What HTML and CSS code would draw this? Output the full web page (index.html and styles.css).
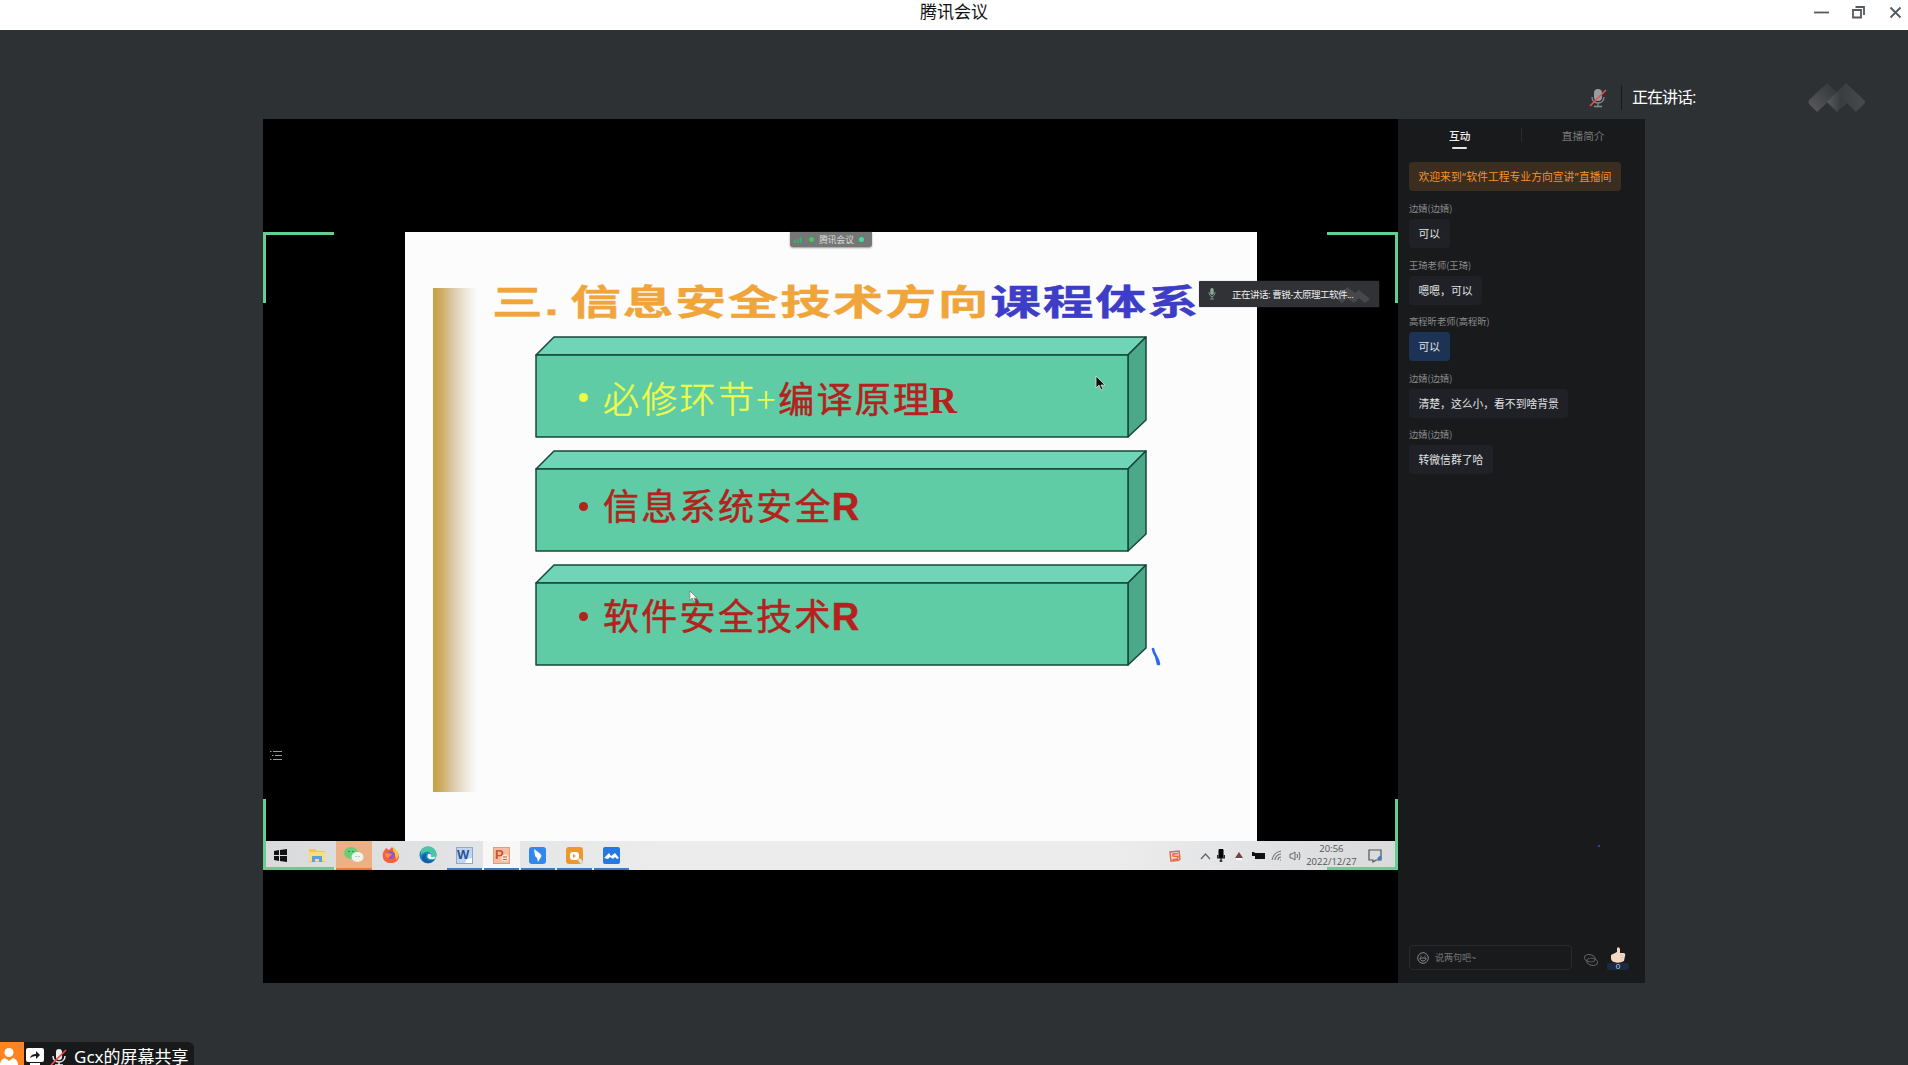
FILE: index.html
```html
<!DOCTYPE html>
<html lang="zh-CN">
<head>
<meta charset="utf-8">
<title>腾讯会议</title>
<link rel="stylesheet" href="styles.css">
</head>
<body>
<header class="titlebar">
  <span></span>
  <h1 class="app-title">腾讯会议</h1>
  <div class="window-controls">
    <svg width="16" height="16" viewBox="0 0 16 16"><path d="M0 8.500h15"/></svg>
    <svg width="16" height="16" viewBox="0 0 16 16"><path d="M2 6h8v7.500H2zM4.500 3h8.500v8"/></svg>
    <svg width="16" height="16" viewBox="0 0 16 16"><path d="M2.500 3.500l10 10M12.500 3.500L2.500 13.500"/></svg>
  </div>
</header>
<main class="meeting">
  <section class="speaker">
    <svg class="speaker-mic" width="18" height="20" viewBox="0 0 18 20"><rect x="5" y="1" width="8" height="12" rx="4" fill="#999c9e"/><path d="M3 9c0 8 12 8 12 0M9 15v3M5 18.500h8" fill="none" stroke="#8a8d8f" stroke-width="1.300"/><path d="M1 18L17 2" stroke="#e4524b" stroke-width="1.600"/></svg>
    <span class="speaker-name">正在讲话:</span>
    <svg class="watermark" width="58" height="30" viewBox="0 0 58 30">
      <defs><linearGradient id="wm" x1="0" y1="1" x2="1" y2="0"><stop offset="0" stop-color="#5a5b5e"/><stop offset="1" stop-color="#303437"/></linearGradient><linearGradient id="wm2" x1="0" y1="0" x2="1" y2="0"><stop offset="0" stop-color="#5a5b5e"/><stop offset=".35" stop-color="#3a3d40"/><stop offset="1" stop-color="#48494c"/></linearGradient></defs>
      <path d="M19 0L29 9L20 19L9 29L2 22Q-1 19 2 16Z" fill="url(#wm)"/>
      <path d="M38 0L55 16Q59 19 55 22L48 29L39 20L29 29L19 19Z" fill="url(#wm2)"/>
    </svg>
  </section>
  <div class="live">
    <section class="share">
      <div class="desktop">
        <div class="side"></div>
        <article class="slide">
          <div class="gold"></div>
          <div class="content">
            <h2 class="slide-title"><span class="num">三.</span><span>信息安全技术方向</span><span class="blue">课程体系</span></h2>
            <div class="block first">
              <svg class="solid" viewBox="0 0 612 102"><path d="M1 19L19 1H611L593 19z" fill="#70d5b7"/><path d="M593 19L611 1V84L593 101z" fill="#4ba98a"/><path d="M1 19H593V101H1z" fill="#5fcca5"/></svg>
              <p class="line yellow"><i></i><span class="thin">必修环节</span><span class="plus">+</span><span class="red">编译原理</span><b class="serif">R</b></p>
              <svg class="pointer dark" width="10" height="16" viewBox="0 0 10 16"><path d="M1 1v12l3-3 2 5 2-1-2-4h4z"/></svg>
            </div>
            <div class="block">
              <svg class="solid" viewBox="0 0 612 102"><path d="M1 19L19 1H611L593 19z" fill="#70d5b7"/><path d="M593 19L611 1V84L593 101z" fill="#4ba98a"/><path d="M1 19H593V101H1z" fill="#5fcca5"/></svg>
              <p class="line red"><i></i><span>信息系统安全</span><b>R</b></p>
            </div>
            <div class="block third">
              <svg class="solid" viewBox="0 0 612 102"><path d="M1 19L19 1H611L593 19z" fill="#70d5b7"/><path d="M593 19L611 1V84L593 101z" fill="#4ba98a"/><path d="M1 19H593V101H1z" fill="#5fcca5"/></svg>
              <p class="line red"><i></i><span>软件安全技术</span><b>R</b></p>
              <svg class="pointer light" width="8" height="13" viewBox="0 0 10 16"><path d="M1 1v12l3-3 2 5 2-1-2-4h4z"/></svg>
              <svg class="ink" width="11" height="20" viewBox="0 0 11 20"><path d="M2 2C3 8 7 10 8 17M5 9L7 17" fill="none" stroke="#2868ef" stroke-width="2.600" stroke-linecap="round"/></svg>
            </div>
          </div>
          <div class="meeting-pill"><svg width="10" height="7" viewBox="0 0 10 7"><path d="M1 7V4M4 7V3M7 7V1" stroke="#36b06e" stroke-width="1.800"/></svg><i></i><span>腾讯会议</span><i class="teal"></i></div>
        </article>
        <div class="side"></div>
        <footer class="taskbar">
          <nav class="apps">
            <div class="app"><svg width="13" height="13" viewBox="0 0 13 13"><path d="M0 2l5-1v5H0zM6 1l7-1v6H6zM0 7h5v5l-5-1zM6 7h7v6l-7-1z" fill="#111"/></svg></div>
            <div class="app"><svg width="18" height="16" viewBox="0 0 18 16"><path d="M1 2h6l2 2h8v11H1z" fill="#f2c850"/><path d="M1 5h16v9H1z" fill="#fbdc7b"/><path d="M4 15V9h10v6h-3v-3H7v3z" fill="#56a5d6"/></svg></div>
            <div class="app wechat"><svg width="20" height="16" viewBox="0 0 20 16"><ellipse cx="7" cy="6" rx="7" ry="6" fill="#65cf7a"/><ellipse cx="13.500" cy="10" rx="6" ry="5" fill="#edf5ef"/><path d="M5 4v1M9 4v1" stroke="#317a43" stroke-width="1.500"/><path d="M12 9v1M15 9v1" stroke="#8ba08f"/></svg></div>
            <div class="app"><svg width="18" height="18" viewBox="0 0 18 18"><path d="M4 2l3 2 3-3 2 3c7 2 7 13-3 13C-1 17 0 7 2 5z" fill="#f6603c"/><path d="M11 1c6 4 7 9 3 13 0-6-4-5-3-13z" fill="#ffc33f"/><circle cx="9" cy="9" r="4" fill="#9355cb"/><path d="M3 8c3-2 5 0 7 0-1 2-3 2-3 4-3 0-4-2-4-4z" fill="#fb8b39"/></svg></div>
            <div class="app"><svg width="18" height="18" viewBox="0 0 18 18"><circle cx="9" cy="9" r="8.500" fill="#1781c8"/><path d="M2 4c5-6 15-4 15.500 5 0 4-6 4-6 2 2-6-5-7-9.500-2z" fill="#4bc6a4"/><path d="M7 8c-2 5 3 8 8 6-4 5-12 3-12-2 0-3 2-4 4-4z" fill="#155d9f"/><path d="M9 8c-2 4 1 6 6 5l2-1c-1-2-3-1-5-1 1-2-1-4-3-3z" fill="#e5f3f5"/></svg></div>
            <div class="app run"><svg width="17" height="17" viewBox="0 0 17 17"><rect x=".5" y=".5" width="16" height="16" fill="#c3d5ec" stroke="#8ba8cf"/><text x="1" y="12" class="office word">W</text><path d="M9 16l2-4 5-1v5z" fill="#fff"/></svg></div>
            <div class="app run active"><svg width="17" height="17" viewBox="0 0 17 17"><rect x=".5" y=".5" width="16" height="16" fill="#f2bfa4" stroke="#d8a083"/><text x="2" y="12" class="office power">P</text><circle cx="12" cy="11" r="3.500" fill="#fae8de"/><path d="M10 10h4M10 12.500h4" stroke="#d4532d"/></svg></div>
            <div class="app run"><svg width="17" height="17" viewBox="0 0 17 17"><rect width="17" height="17" rx="3" fill="#3187ee"/><path d="M5 2c3 3 9 5 7 8l-3 5-1-4-2-2z" fill="#fff"/></svg></div>
            <div class="app run"><svg width="17" height="17" viewBox="0 0 17 17"><rect width="17" height="17" rx="3" fill="#ed982c"/><rect x="4" y="5" width="9" height="8" rx="3" fill="#fff"/><path d="M7 7l3 2-3 2z" fill="#ed982c"/><path d="M13 12l3 4" stroke="#d5e4f0" stroke-width="3"/></svg></div>
            <div class="app run"><svg width="17" height="17" viewBox="0 0 17 17"><rect width="17" height="17" rx="2" fill="#2577e4"/><path d="M1 11l5-5 2 3 4-3 4 5-2 1-2-2-2 2-3-2-2 2z" fill="#fff"/></svg></div>
          </nav>
          <div class="tray">
            <svg width="12" height="12" viewBox="0 0 12 12"><path d="M9 3.500L4 4v2l5 .5-.5 2.500-5 .5M1 2l9-1 1 8q0 2-9 2z" fill="none" stroke="#e7673e" stroke-width="1.500"/></svg>
            <svg class="caret" width="11" height="8" viewBox="0 0 11 8"><path d="M1 7l4.500-5L10 7" fill="none" stroke="#666" stroke-width="1.300"/></svg>
            <svg width="8" height="13" viewBox="0 0 8 13"><rect x="1.500" width="5" height="9" rx="1"/><path d="M.7 6v3h6.600V6M4 9v4M2.500 12h3" fill="none" stroke="#111" stroke-width="1.200"/></svg>
            <svg class="drop" width="10" height="10" viewBox="0 0 10 10"><path d="M5 1l4 6H1z" fill="#70434a"/><path d="M2 8h6" stroke="#fff" stroke-width="2"/></svg>
            <svg width="13" height="9" viewBox="0 0 13 9"><path d="M2 2h11v6H3V5H0V1h3z" fill="#111"/></svg>
            <svg width="11" height="11" viewBox="0 0 11 11"><path d="M1 10C2 5 5 2 10 1M4 10c0-3 3-6 6-6M7 10c0-2 1-3 3-3M10 10H9" fill="none" stroke="#777" stroke-width="1.200"/></svg>
            <svg width="12" height="10" viewBox="0 0 12 10"><path d="M1 3h2l3-2v8L3 7H1zM8 3q1 2 0 4M10 1q2 4 0 8" fill="none" stroke="#666"/></svg>
            <time class="clock"><span>20:56</span><span>2022/12/27</span></time>
            <svg width="15" height="14" viewBox="0 0 15 14"><path d="M1 1h12v10H8l-3 2v-2H1z" fill="none" stroke="#555" stroke-width="1.200"/><path d="M10 10.500l3-3" stroke="#3978d1" stroke-width="2.500"/></svg>
          </div>
        </footer>
        <i class="corner tl"></i><i class="corner tr"></i><i class="corner bl"></i><i class="corner br"></i>
        <svg class="list-icon" width="12" height="11" viewBox="0 0 12 11"><path d="M3 1.500h9M5 5.500h7M3 9.500h9M0 1.500h1.500M2 5.500h1.500M0 9.500h1.500" stroke="#999"/></svg>
        <div class="talking"><svg width="8" height="12" viewBox="0 0 8 12"><rect x="2.300" width="3.400" height="7" rx="1.700" fill="#8aa99c"/><path d="M1 4c0 6 6 6 6 0M4 8v3M2 11h4" fill="none" stroke="#769184"/></svg><span>正在讲话: 曹锐-太原理工软件...</span><svg class="talk-mark" width="34" height="16" viewBox="0 0 34 16"><path d="M0 11L11 0l8 6 4-3 11 9-5 4-6-5-5 5-7-5-5 5z" fill="#55575b"/></svg></div>
      </div>
    </section>
    <aside class="chat">
      <nav class="tabs"><span class="tab selected">互动</span><span class="tab">直播简介</span></nav>
      <p class="welcome">欢迎来到<q>“</q>软件工程专业方向宣讲<q>”</q>直播间</p>
      <div class="message"><span class="name">边婧(边婧)</span><p class="bubble">可以</p></div>
      <div class="message"><span class="name">王琦老师(王琦)</span><p class="bubble">嗯嗯，可以</p></div>
      <div class="message"><span class="name">高程昕老师(高程昕)</span><p class="bubble own">可以</p></div>
      <div class="message"><span class="name">边婧(边婧)</span><p class="bubble">清楚，这么小，看不到啥背景</p></div>
      <div class="message"><span class="name">边婧(边婧)</span><p class="bubble">转微信群了哈</p></div>
      <div class="composer">
        <div class="input"><svg width="12" height="12" viewBox="0 0 12 12"><circle cx="6" cy="6" r="5.300"/><path d="M4 3.500v1M8 3.500v1M3 6h6c0 4-6 4-6 0z"/></svg><span>说两句吧~</span></div>
        <svg class="link" width="16" height="14" viewBox="0 0 16 14"><g transform="rotate(12 8 7)"><ellipse cx="6.500" cy="5.500" rx="5.500" ry="3.500"/><ellipse cx="9.500" cy="8.500" rx="5.500" ry="3.500"/></g></svg>
        <div class="like"><svg width="16" height="16" viewBox="0 0 16 16"><path d="M1 8l6-3V1q2-2 3 1v4h4q2 1 1 3l-1 5q-5 3-10 1-3-1-3-4z" fill="#f3d9c5"/><path d="M10 8h4M10 10.500h4M10 13h3" stroke="#d9b9a4" stroke-width=".6"/></svg><span>0</span></div>
      </div>
      <i class="blue-dot"></i>
    </aside>
  </div>
  <footer class="sharer">
    <span class="avatar"><svg width="24" height="23" viewBox="0 0 24 23"><circle cx="9" cy="10.500" r="4.500" fill="#fff"/><path d="M0 23v-1q1-5 5-6l4 3 4-3q4 1 5 6v1z" fill="#fff"/></svg></span>
    <svg class="shift" width="18" height="17" viewBox="0 0 18 17"><rect width="18" height="14" rx="2" fill="#fff"/><path d="M4 10q1-4 6-4V3l4 4-4 4V8q-3 0-6 2z" fill="#181a1c"/><path d="M4 16h10" stroke="#fff" stroke-width="2"/></svg>
    <svg class="shift" width="18" height="18" viewBox="0 0 18 18"><rect x="6" y="1" width="6" height="11" rx="3" fill="#eee"/><path d="M3 8c0 8 12 8 12 0M9 14v4M5 17h8" fill="none" stroke="#eee" stroke-width="1.500"/><path d="M1 17L16 2" stroke="#e84b48" stroke-width="1.700"/></svg>
    <span class="sharer-name">Gcx的屏幕共享</span>
  </footer>
</main>
</body>
</html>
```
FILE: styles.css
```css
* { box-sizing: border-box; }
body { margin: 0; width: 1908px; height: 1065px; overflow: hidden; display: flex; flex-direction: column; background: #2d3134; font-family: "Liberation Sans", "Noto Sans CJK SC", sans-serif; }
h1, h2, p { margin: 0; }
svg { display: block; flex: none; }
.titlebar { height: 30px; flex: none; display: grid; grid-template-columns: 1fr auto 1fr; align-items: center; background: #fff; }
.app-title { font-size: 17px; font-weight: 400; line-height: 24px; color: #111; padding-bottom: 4px; }
.window-controls { display: flex; justify-content: flex-end; gap: 21px; padding: 0 4px 6px 0; }
.window-controls path { fill: none; stroke: #555960; stroke-width: 1.8; }
.meeting { flex: 1; min-height: 0; display: flex; flex-direction: column; }
.speaker { height: 89px; flex: none; display: flex; align-items: center; padding: 46px 42px 0 1589px; }
.speaker-name { margin-left: 14px; padding-left: 10px; border-left: 1px solid #17191b; font-size: 16px; letter-spacing: -1px; line-height: 25px; color: #fff; white-space: nowrap; }
.watermark { margin-left: auto; }
.live { height: 864px; flex: none; display: flex; margin-left: 263px; width: 1382px; }
.share { width: 1135px; flex: none; background: #000; padding-top: 113px; }
.desktop { position: relative; height: 638px; display: grid; grid-template: 609px 29px / 142px 852px 141px; }
.slide { position: relative; background: #fcfcfd; display: flex; padding: 56px 0 0 28px; }
.gold { width: 44px; height: 504px; flex: none; background: linear-gradient(90deg, #c6a044 0%, #cead62 20%, #dcc9aa 45%, #eee8dc 75%, #fcfcfd 100%); }
.content { flex: 1; padding-left: 15px; }
.slide-title { display: flex; height: 48px; margin-top: -5px; width: 486px; transform: scaleX(1.45); transform-origin: left; font: 700 35px/40px "Liberation Sans", "Noto Sans CJK SC", sans-serif; letter-spacing: 1.2px; color: #f0a53a; white-space: nowrap; -webkit-text-stroke: .4px currentColor; }
.num { width: 54px; flex: none; }
.blue { color: #3d3dc8; }
.block { position: relative; width: 612px; height: 102px; margin: 0 0 12px 42.5px; padding: 34px 0 0 44.5px; }
.block.first { padding-top: 37px; margin-top: 5px; }
.block.third { padding-top: 30px; }
.solid { position: absolute; inset: 0; width: 612px; height: 102px; }
.solid path { stroke: #16473a; stroke-width: 1.5; stroke-linejoin: round; }
.line { position: relative; display: flex; align-items: baseline; height: 48px; font-size: 36px; line-height: 48px; letter-spacing: 2.3px; white-space: nowrap; }
.line i { width: 9px; height: 9px; margin: 0 15px 3px 0; border-radius: 50%; background: currentColor; align-self: center; }
.first .line i { margin-bottom: 0; }
.line b { letter-spacing: 0; font-size: 38px; line-height: 40px; margin-left: -1px; }
.line .serif { font-family: "Liberation Serif", serif; font-size: 38px; color: #b3221c; margin-left: -2px; }
.yellow { color: #effb45; }
.red { color: #b3221c; font-weight: 400; -webkit-text-stroke: .5px currentColor; }
.thin { font-weight: 300; -webkit-text-stroke: .5px currentColor; }
.plus { width: 22px; font-family: "Noto Sans CJK SC", sans-serif; font-weight: 300; }
.pointer { position: absolute; }
.dark { left: 560px; top: 39px; fill: #111; stroke: #ddd; stroke-width: .8; }
.light { left: 154px; top: 26px; fill: #fff; stroke: #777; }
.ink { position: absolute; left: 616px; top: 83px; }
.meeting-pill { position: absolute; top: 0; left: 385px; width: 82px; height: 15px; display: flex; align-items: center; justify-content: center; gap: 5px; padding-right: 4px; border-radius: 0 0 3px 3px; background: #747775; box-shadow: 0 1px 2px #999; font-size: 8.7px; line-height: 14px; color: #ddd; }
.meeting-pill i { width: 5px; height: 5px; border-radius: 50%; background: #42c765; }
.meeting-pill .teal { background: #3ce0a0; }
.taskbar { grid-column: 1 / 4; background: linear-gradient(90deg, #d9dadb, #ececed 35%, #ececed 75%, #d8dadb); display: flex; justify-content: space-between; padding: 0 15px 0 0; }
.apps { display: flex; margin-left: -1px; }
.app { width: 36.8px; display: flex; align-items: center; justify-content: center; padding-top: 1px; border-bottom: 2px solid transparent; }
.wechat { background: #ebb184; border-color: #ed7a34; }
.run { border-image: linear-gradient(90deg, transparent 8%, #3778c7 8%, #3778c7 92%, transparent 92%) 2; }
.active { background: #f8f7f6; }
.office { font: bold 13px "Liberation Sans", sans-serif; }
.word { fill: #245399; }
.power { fill: #d35428; }
.tray { display: flex; align-items: center; gap: 6.6px; }
.caret { margin-left: 12px; }
.drop { margin: 0 1px 0 2px; }
.clock { width: 50px; display: flex; flex-direction: column; align-items: center; font: 9.5px/13px "Open Sans", sans-serif; color: #555; margin: 0 5px 1px -1px; }
.corner { position: absolute; width: 71px; height: 71px; border: 0 solid #65cf91; }
.tl { left: 0; top: 0; border-width: 3px 0 0 3px; }
.tr { right: 0; top: 0; border-width: 3px 3px 0 0; }
.bl { left: 0; bottom: 0; border-width: 0 0 3px 3px; }
.br { right: 0; bottom: 0; border-width: 0 3px 3px 0; }
.list-icon { position: absolute; left: 7px; top: 518px; }
.talking { position: absolute; left: 936px; top: 49px; width: 180px; height: 26px; display: flex; align-items: center; gap: 16px; padding-left: 9px; border-radius: 1px; background: #303236; box-shadow: 0 0 1px #777; font-size: 9.5px; letter-spacing: -.5px; color: #eee; white-space: nowrap; }
.talking span { position: relative; z-index: 1; }
.talk-mark { position: absolute; right: 9px; top: 6px; opacity: .6; }
.chat { position: relative; width: 247px; display: flex; flex-direction: column; padding: 0 17px 11px 11px; background: #191a1c; }
.tabs { height: 34px; flex: none; display: flex; margin: 0 -17px 0 -11px; }
.tab { flex: 1; text-align: center; font-size: 10.7px; line-height: 34px; color: #77787a; position: relative; }
.selected { color: #f0f0f0; font-weight: 500; }
.selected::before { content: ""; position: absolute; right: 0; top: 9px; width: 1px; height: 14px; background: #2b2c2e; }
.selected::after { content: ""; position: absolute; left: 54px; top: 28px; width: 15px; height: 2px; border-radius: 1px; background: #e5e5e5; }
.welcome { align-self: flex-start; margin: 9px 0 8px; height: 29px; padding: 0 9.5px; border-radius: 4px; background: #3b2d20; color: #f3922b; font: 10.8px/29px "Noto Sans CJK SC", sans-serif; white-space: nowrap; }
.welcome q { quotes: none; font-family: "Noto Sans", sans-serif; padding: 0 .4px; }
.message { height: 56.6px; flex: none; display: flex; flex-direction: column; align-items: flex-start; }
.name { font: 9.3px/18px "Noto Sans CJK SC", sans-serif; color: #8b8c8e; }
.bubble { height: 29px; margin-top: 2px; padding: 0 9.5px; border-radius: 4px; background: #1f2126; color: #e2e3e5; font: 10.8px/29px "Noto Sans CJK SC", sans-serif; }
.own { background: #1c3356; }
.composer { margin: auto -3px 0 0; display: flex; align-items: center; }
.input { flex: none; width: 163px; height: 25px; margin-bottom: 2px; display: flex; align-items: center; gap: 6px; padding: 0 7px; border: 1px solid #292b2e; border-radius: 4px; font-size: 9px; color: #77797c; }
.input svg, .link { fill: none; stroke: #88898b; }
.link { margin: 2px 0 0 11px; stroke: #606264; }
.like { width: 22px; margin-left: 8px; display: flex; flex-direction: column; align-items: center; }
.like span { width: 22px; height: 7px; background: #192a42; color: #c7d4e5; font-size: 8px; line-height: 7px; text-align: center; border-radius: 2px; }
.blue-dot { position: absolute; left: 200px; top: 726px; width: 2px; height: 2px; background: #2459d5; border-radius: 50%; }
.sharer { align-self: flex-start; height: 23px; margin-top: auto; display: flex; align-items: flex-start; gap: 6px; padding-right: 5px; background: #17191b; border-radius: 0 6px 0 0; font: 17px/30px "Noto Sans", "Noto Sans CJK SC", sans-serif; color: #fff; white-space: nowrap; }
.avatar { width: 24px; background: #ff8420; margin-right: -4px; }
.shift { margin-top: 6px; }
.sharer-name { height: 23px; }
```
